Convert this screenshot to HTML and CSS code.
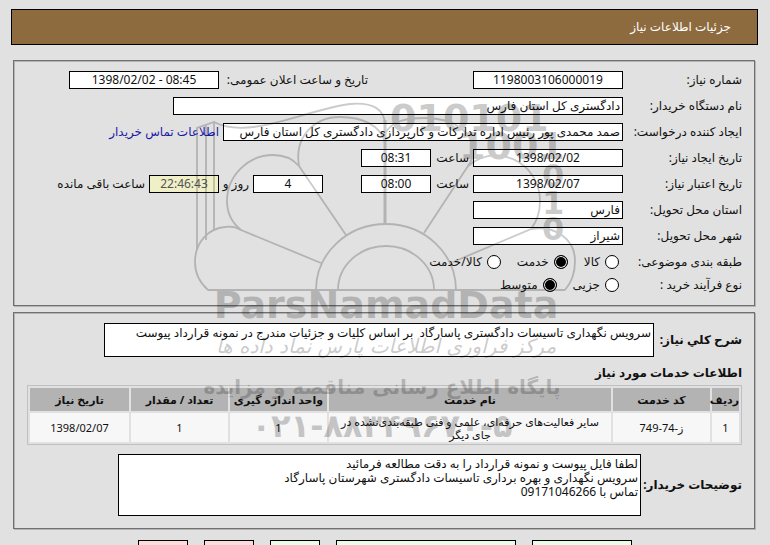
FILE: index.html
```html
<!DOCTYPE html>
<html lang="fa" dir="rtl">
<head>
	<meta charset="UTF-8">
	<title>جزئیات اطلاعات نیاز</title>
	<link rel="stylesheet" href="styles.css">
</head>
<body>
	<h1 class="title">جزئیات اطلاعات نیاز</h1>

	<fieldset class="box info">
		<div class="row">
			<label class="name" for="number">شماره نیاز:</label>
			<input class="text middle" id="number" type="text" value="1198003106000019" readonly>
			<label class="public" for="public">تاریخ و ساعت اعلان عمومی:</label>
			<input class="text middle" id="public" type="text" value="1398/02/02 - 08:45" dir="ltr" readonly>
		</div>
		<div class="row">
			<label class="name" for="buyer">نام دستگاه خریدار:</label>
			<input class="text long" id="buyer" type="text" value="دادگستری کل استان فارس" readonly>
		</div>
		<div class="row">
			<label class="name" for="creator">ایجاد کننده درخواست:</label>
			<input class="text wide" id="creator" type="text" value="صمد محمدی پور رئیس اداره تدارکات و کارپردازی دادگستری کل استان فارس" readonly>
			<a class="contact" href="#">اطلاعات تماس خریدار</a>
		</div>
		<div class="row">
			<label class="name" for="created">تاریخ ایجاد نیاز:</label>
			<input class="text middle" id="created" type="text" value="1398/02/02" readonly>
			<label class="hour" for="createdHour">ساعت</label>
			<input class="text short" id="createdHour" type="text" value="08:31" readonly>
		</div>
		<div class="row">
			<label class="name" for="valid">تاریخ اعتبار نیاز:</label>
			<input class="text middle" id="valid" type="text" value="1398/02/07" readonly>
			<label class="hour" for="validHour">ساعت</label>
			<input class="text short" id="validHour" type="text" value="08:00" readonly>
			<input class="text short days" id="days" type="text" value="4" readonly>
			<label class="dayLabel" for="days">روز و</label>
			<input class="text short left" id="left" type="text" value="22:46:43" readonly>
			<label class="leftLabel" for="left">ساعت باقی مانده</label>
		</div>
		<div class="row">
			<label class="name" for="province">استان محل تحویل:</label>
			<input class="text place" id="province" type="text" value="فارس" readonly>
		</div>
		<div class="row">
			<label class="name" for="city">شهر محل تحویل:</label>
			<input class="text place" id="city" type="text" value="شیراز" readonly>
		</div>
		<div class="row radios">
			<span class="name">طبقه بندی موضوعی:</span>
			<label class="choice"><input type="radio" name="subject">کالا</label>
			<label class="choice"><input type="radio" name="subject" checked>خدمت</label>
			<label class="choice"><input type="radio" name="subject">کالا/خدمت</label>
		</div>
		<div class="row radios">
			<span class="name">نوع فرآیند خرید :</span>
			<label class="choice"><input type="radio" name="process">جزیی</label>
			<label class="choice"><input type="radio" name="process" checked>متوسط</label>
		</div>
	</fieldset>

	<fieldset class="box service">
		<div class="area">
			<label class="summaryLabel" for="summary">شرح کلي نیاز:</label>
			<textarea class="summary" id="summary" readonly>سرویس نگهداری تاسیسات دادگستری پاسارگاد  بر اساس کلیات و جزئیات مندرج در نمونه قرارداد پیوست</textarea>
		</div>
		<h2>اطلاعات خدمات مورد نیاز</h2>
		<table class="list">
			<tr>
				<th class="c1">ردیف</th>
				<th class="c2">کد خدمت</th>
				<th>نام خدمت</th>
				<th class="c2">واحد اندازه گیری</th>
				<th class="c2">تعداد / مقدار</th>
				<th class="c3">تاریخ نیاز</th>
			</tr>
			<tr>
				<td>1</td>
				<td>ز-74-749</td>
				<td>سایر فعالیت‌های حرفه‌ای، علمی و فنی طبقه‌بندی‌نشده در جای دیگر</td>
				<td>1</td>
				<td>1</td>
				<td>1398/02/07</td>
			</tr>
		</table>
		<div class="area">
			<label class="notesLabel" for="notes">توضیحات خریدار:</label>
			<textarea class="notes" id="notes" readonly>لطفا فایل پیوست و نمونه قرارداد را به دقت مطالعه فرمائید
سرویس نگهداری و بهره برداری تاسیسات دادگستری شهرستان پاسارگاد
تماس با 09171046266</textarea>
		</div>
	</fieldset>

	<div class="buttons">
		<button class="green b100" type="button"></button>
		<button class="green b180" type="button"></button>
		<button class="green" type="button"></button>
		<button class="pink" type="button"></button>
		<button class="pink" type="button"></button>
	</div>

	<!-- watermark -->
	<svg class="mark" width="400" height="360" viewBox="190 90 400 360">
		<g fill="none" stroke="#000" stroke-width="1.8">
			<path d="M208 290H565"/>
			<path d="M316 290A70 66 0 0 1 456 290M338 290A48 44 0 0 1 434 290"/>
			<path d="M208 290C199 282 195 273 195 262C195 242 209 228 225 227C231 226 236 227 241 230L321 263"/>
			<path d="M241 230C231 222 227 212 227 201C227 176 248 155 273 155C284 155 293 159 299 166L346 235"/>
			<path d="M299 166C294 137 314 117 340 117C362 117 380 125 385 142"/>
			<path d="M385 120V225" stroke-width="3"/>
			<path d="M385 133C393 121 404 118 425 118C456 118 474 134 473 152C473 158 471 162 468 166L424 233"/>
			<path d="M468 166C478 158 490 154 501 156C524 159 540 178 540 201C540 212 538 220 531 229L453 262"/>
			<path d="M531 229C555 225 575 239 575 261C575 273 572 282 565 290"/>
			<path d="M197 250V128L214 122V231M206 240V125M214 122C250 141 310 108 350 104C374 102 385 110 385 125"/>
		</g>
		<text class="bits" x="390" y="131">010101</text>
		<text class="bits" x="459" y="159">1001</text>
		<text class="bits small" x="542" y="187">0</text>
		<text class="bits small" x="542" y="214">1</text>
		<text class="bits small" x="542" y="240">0</text>
		<text class="brand" x="386" y="318">ParsNamadData</text>
		<text class="slogan" x="386" y="353">مرکز فرآوری اطلاعات پارس نماد داده ها</text>
		<text class="site" x="382" y="394">پایگاه اطلاع رسانی مناقصه و مزایده</text>
		<text class="phone" x="382" y="437">۰۲۱-۸۸۳۴۹۶۷۰-۵</text>
	</svg>
</body>
</html>
```
FILE: styles.css
```css
*{
	box-sizing: border-box;
}
html{
	overflow: hidden;
}
body{
	position: relative;
	margin: 0;
	padding: 9px 12px 0 11px;
	background: #e1e1e1;
	font: 12px/16px "Noto Sans", "DejaVu Sans", sans-serif;
	color: #111;
}
.title{
	margin: 0 0 15px;
	padding: 9px 26px;
	border: 1px solid #000;
	background: #8d6b3f;
	font-size: 12px;
	font-weight: normal;
	color: #fff;
}
.box{
	margin: 0 3px 6px 2px;
	padding: 10px 12px 6px 13px;
	border: 1px solid #707070;
	box-shadow: 1px 1px 0 #b4b4b4, inset 1px 1px 0 #b4b4b4;
}
.service{
	padding-bottom: 12px;
}
.row{
	display: flex;
	align-items: center;
	height: 18px;
	margin-bottom: 8px;
	white-space: nowrap;
}
.name{
	width: 119px;
}
.text{
	height: 18px;
	padding: 0 2px 2px;
	border: 1px solid #000;
	background: #fff;
	font: inherit;
	color: #111;
}
.middle, .short{
	width: 150px;
	text-align: center;
}
.short{
	width: 70px;
}
.place{
	width: 150px;
}
.long{
	width: 450px;
}
.wide{
	width: 400px;
}
.public{
	width: 149px;
	margin-right: 105px;
}
.contact{
	margin-right: 4px;
	color: #1a1aa8;
	text-decoration: none;
}
.hour{
	width: 42px;
	padding-right: 4px;
}
.days{
	margin-right: 38px;
}
.dayLabel{
	width: 34px;
	padding-right: 4px;
}
.left{
	background: #f0f0c8;
	color: #555;
}
.leftLabel{
	padding-right: 4px;
}
.radios{
	margin-bottom: 5px;
}
.choice{
	display: flex;
	align-items: center;
	margin: 0 4px 0 12px;
}
.choice input{
	appearance: none;
	width: 14px;
	height: 14px;
	margin: 0 0 0 5px;
	border: 1px solid #000;
	border-radius: 50%;
	background: #fff;
}
.choice input:checked{
	background: #000;
	box-shadow: inset 0 0 0 1px #fff;
}
.area{
	display: flex;
	align-items: center;
	font-weight: bold;
	white-space: nowrap;
}
.area textarea{
	display: block;
	padding: 2px;
	border: 1px solid #000;
	background: #fff;
	font: 12px/14px "Noto Sans", "DejaVu Sans", sans-serif;
	color: #111;
	resize: none;
	overflow: hidden;
}
.summaryLabel{
	width: 88px;
}
.notesLabel{
	width: 101px;
}
.summary{
	width: 550px;
	height: 34px;
}
.notes{
	width: 523px;
	height: 62px;
}
h2{
	margin: 8px 0 4px;
	font-size: 12px;
}
.list{
	width: 100%;
	margin-bottom: 9px;
	border: 1px solid #c0c0c0;
	border-spacing: 2px;
	table-layout: fixed;
	font-size: 11px;
	line-height: 13px;
	text-align: center;
}
.list th{
	height: 23px;
	padding: 0;
	background: #b3b3b3;
}
.list td{
	height: 29px;
	padding: 0 4px;
	background: #f7f7f7;
}
.list .c1{
	width: 27px;
}
.list .c2{
	width: 97px;
}
.list .c3{
	width: 99px;
}
.buttons{
	display: flex;
	justify-content: center;
	gap: 16px;
	margin-top: 11px;
}
.buttons button{
	width: 50px;
	height: 24px;
	border: 1px solid #000;
}
.buttons .b100{
	width: 100px;
}
.buttons .b180{
	width: 180px;
}
.green{
	background: #eafcea;
}
.pink{
	background: #fcdcdc;
}
.mark{
	position: absolute;
	top: 90px;
	left: 190px;
	opacity: .2;
	pointer-events: none;
}
.mark text{
	direction: rtl;
	text-anchor: middle;
	font-family: "DejaVu Sans", sans-serif;
	font-weight: bold;
}
.mark .bits{
	direction: ltr;
	text-anchor: start;
	font-size: 38px;
}
.mark .small{
	font-size: 32px;
}
.mark .brand{
	direction: ltr;
	font-size: 38px;
}
.mark .slogan{
	font-size: 20px;
	font-style: italic;
	font-weight: normal;
}
.mark .site{
	font-size: 20px;
}
.mark .phone{
	direction: ltr;
	font-size: 32px;
}
```
